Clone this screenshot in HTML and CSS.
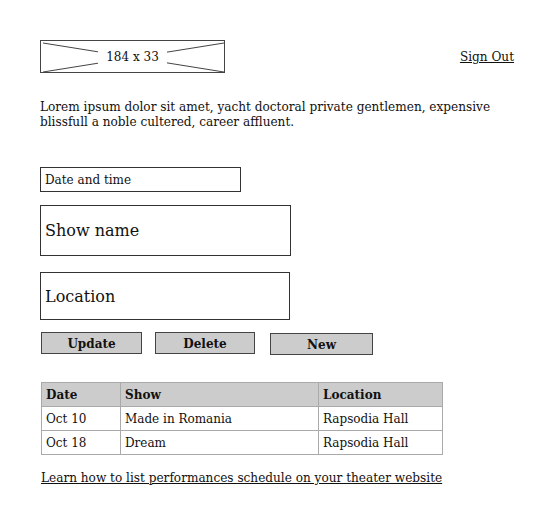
FILE: index.html
```html
<!DOCTYPE html>
<html lang="en">
<head>
    <meta charset="UTF-8">
    <meta name="viewport" content="width=device-width, initial-scale=1.0">
    <title>Theater Schedule</title>
    <link rel="stylesheet" href="styles.css">
</head>
<body>
    <div class="page">
        <div class="top-bar">
            <div class="logo">
                <svg class="logo-x" width="185" height="33" viewBox="0 0 185 33">
                    <line x1="2" y1="2" x2="183" y2="31" />
                    <line x1="2" y1="31" x2="183" y2="2" />
                </svg>
                <span class="logo-text">184 x 33</span>
            </div>
            <a href="#" class="sign-out">Sign Out</a>
        </div>

        <p class="intro">Lorem ipsum dolor sit amet, yacht doctoral private gentlemen, expensive blissfull a noble cultered, career affluent.</p>

        <form class="show-form">
            <div class="field field-small">Date and time</div>
            <div class="field field-big">Show name</div>
            <div class="field field-big field-loc">Location</div>

            <div class="buttons">
                <button type="button" class="btn-update">Update</button>
                <button type="button" class="btn-delete">Delete</button>
                <button type="button" class="btn-new">New</button>
            </div>
        </form>

        <table class="schedule">
            <thead>
                <tr>
                    <th class="col-date">Date</th>
                    <th class="col-show">Show</th>
                    <th>Location</th>
                </tr>
            </thead>
            <tbody>
                <tr>
                    <td>Oct 10</td>
                    <td>Made in Romania</td>
                    <td>Rapsodia Hall</td>
                </tr>
                <tr>
                    <td>Oct 18</td>
                    <td>Dream</td>
                    <td>Rapsodia Hall</td>
                </tr>
            </tbody>
        </table>

        <a href="#" class="learn">Learn how to list performances schedule on your theater website</a>
    </div>
</body>
</html>
```

FILE: styles.css
```css
body {
    font-family: "DejaVu Serif", serif;
    margin: 0;
    color: #111;
    background: #fff;
}
.page {
    padding: 40px 40px 0 40px;
}
.top-bar {
    display: flex;
    justify-content: space-between;
    align-items: center;
}
.logo {
    position: relative;
    width: 185px;
    height: 33px;
    border: 1px solid #444;
    box-sizing: border-box;
    display: flex;
    align-items: center;
    justify-content: center;
}
.logo-x {
    position: absolute;
    left: 0;
    top: 0;
}
.logo-x line {
    stroke: #444;
    stroke-width: 1;
}
.logo-text {
    position: relative;
    background: #fff;
    padding: 0 8px;
    font-size: 12px;
}
.sign-out {
    color: #111;
    font-size: 12.1px;
}
.intro {
    font-size: 12.1px;
    line-height: 15px;
    margin: 27px 0 0 0;
}
.show-form {
    margin-top: 37px;
}
.field {
    border: 1px solid #333;
    box-sizing: border-box;
    display: flex;
    align-items: center;
    padding-left: 4px;
}
.field-small {
    width: 201px;
    height: 25px;
    font-size: 12px;
}
.field-big {
    width: 251px;
    height: 51px;
    font-size: 16px;
    margin-top: 13px;
}
.field-loc {
    width: 250px;
    height: 48px;
    margin-top: 16px;
}
.buttons {
    display: flex;
    gap: 13px;
    margin-top: 12px;
    margin-left: 1px;
}
button {
    font-family: "DejaVu Serif", serif;
    font-weight: bold;
    font-size: 12px;
    color: #111;
    background: #ccc;
    border: 1px solid #444;
    height: 22px;
    padding: 1px 0 0 0;
}
.btn-update {
    width: 101px;
}
.btn-delete {
    width: 100px;
}
.btn-new {
    width: 103px;
    margin-left: 2px;
    margin-top: 1px;
}
.schedule {
    margin-top: 27px;
    margin-left: 1px;
    border-collapse: collapse;
    width: 402px;
    font-size: 12px;
}
.schedule th,
.schedule td {
    border: 1px solid #aaa;
    text-align: left;
    padding: 0 4px;
    height: 23px;
}
.schedule th {
    background: #ccc;
}
.col-date {
    width: 70px;
}
.col-show {
    width: 189px;
}
.learn {
    display: inline-block;
    margin-top: 16px;
    margin-left: 1px;
    color: #111;
    font-size: 12.1px;
}
```
